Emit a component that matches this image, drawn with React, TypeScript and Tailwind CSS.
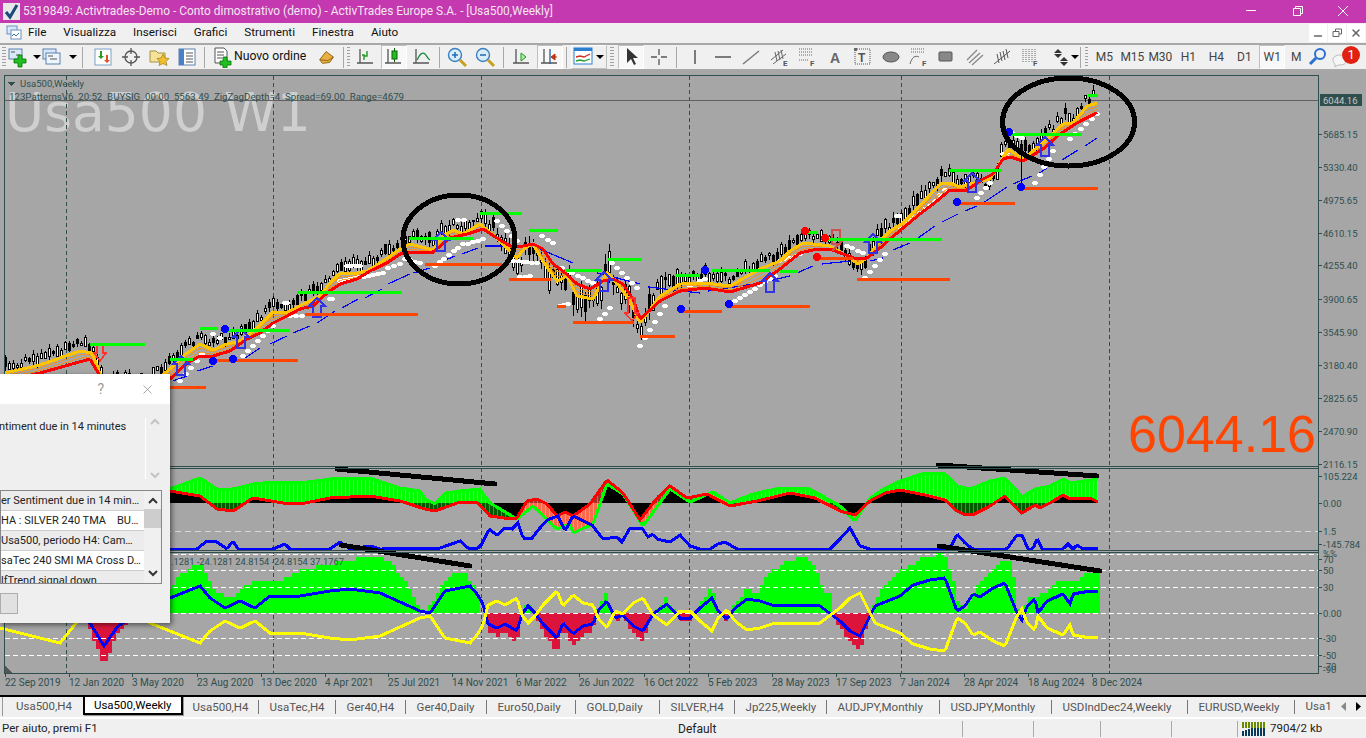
import type { ReactNode } from "react";
import { X, Minus } from "lucide-react";

type Pt = [number, number];

const interp = (pts: Pt[], x: number) => {
  if (x <= pts[0][0]) return pts[0][1];
  for (let i = 1; i < pts.length; i++) {
    if (x <= pts[i][0]) {
      const [x0, y0] = pts[i - 1];
      const [x1, y1] = pts[i];
      return y0 + ((y1 - y0) * (x - x0)) / (x1 - x0);
    }
  }
  return pts[pts.length - 1][1];
};

const sample = (fn: (x: number) => number, from: number, to: number, step = 2) => {
  const out: string[] = [];
  for (let x = from; x <= to; x += step) out.push(`${x},${fn(x).toFixed(1)}`);
  return out.join(" ");
};

const rng = (seed: number) => () => {
  seed = (seed * 16807) % 2147483647;
  return seed / 2147483647;
};

// main pane
const redPts: Pt[] = [[5,380],[40,372],[90,358],[100,375],[120,400],[150,392],[170,378],[187,362],[200,355],[213,355],[230,350],[247,338],[260,332],[273,322],[287,315],[300,308],[313,305],[327,292],[340,283],[357,278],[370,270],[387,262],[400,253],[417,251],[433,251],[450,237],[467,233],[483,228],[497,237],[510,245],[523,245],[533,243],[543,248],[553,263],[563,270],[577,283],[590,288],[603,280],[613,278],[623,283],[633,298],[640,318],[660,300],[680,290],[705,287],[730,291],[760,282],[780,268],[790,260],[800,252],[813,249],[830,248],[843,253],[857,258],[867,257],[880,247],[890,238],[903,227],[920,213],[937,200],[950,189],[967,189],[983,178],[993,173],[1003,158],[1010,156],[1023,160],[1043,148],[1060,133],[1077,122],[1098,111]];
const yellowPts: Pt[] = [[5,372],[40,364],[80,350],[92,352],[105,385],[150,384],[170,368],[183,355],[200,343],[213,349],[227,343],[240,340],[257,327],[273,311],[287,312],[303,303],[320,295],[330,282],[340,272],[353,273],[367,270],[383,260],[400,248],[410,243],[433,249],[443,235],[453,229],[463,233],[480,223],[497,237],[517,257],[525,247],[533,243],[543,260],[557,280],[567,275],[577,295],[593,298],[607,272],[617,282],[630,300],[640,322],[660,295],[680,283],[705,282],[730,285],[760,268],[780,260],[790,250],[803,242],[813,243],[830,245],[847,255],[858,263],[867,257],[880,240],[890,230],[903,222],[913,212],[927,197],[940,183],[950,182],[960,186],[970,183],[990,178],[997,167],[1008,148],[1023,158],[1033,150],[1043,142],[1063,123],[1073,122],[1087,105],[1098,102]];
const red = (x: number) => interp(redPts, x);
const yellow = (x: number) => interp(yellowPts, x);
const volPts: Pt[] = [[0,12],[300,12],[480,14],[520,24],[600,32],[660,24],[760,12],[860,18],[960,16],[1098,16]];

const greenSegs = [[90,145,343],[170,193,358],[200,218,327],[228,290,329],[297,402,291],[409,474,237],[480,522,212],[529,558,229],[565,602,269],[608,642,258],[675,700,274],[712,770,269],[780,798,270],[808,818,231],[828,942,238],[949,1002,169],[1010,1082,133],[1088,1098,94]];
const orangeSegs = [[170,206,386],[217,298,359],[305,418,313],[425,502,263],[509,551,278],[557,566,305],[573,634,321],[640,675,335],[680,722,310],[730,810,305],[820,853,257],[857,950,278],[960,1015,202],[1023,1098,187]];
const blueDots: Pt[] = [[225,328],[213,360],[233,358],[705,269],[681,308],[729,303],[957,201],[1009,131],[1021,186]];
const redDots: Pt[] = [[805,230],[825,237],[817,256]];
const whiteSegs = [[180,380,202,353],[213,333,220,337],[243,355,273,325],[290,315,302,315],[285,302,287,302],[330,298,332,298],[340,280,383,272],[347,265,360,265],[388,267,400,263],[405,258,420,262],[435,265,463,243],[468,243,483,238],[458,219,464,219],[497,220,517,240],[513,260,537,262],[520,276,530,275],[542,235,553,242],[562,267,593,282],[560,305,568,303],[600,318,610,307],[612,262,637,287],[640,345,665,305],[690,285,705,278],[735,300,775,275],[780,260,800,253],[847,245,863,252],[865,277,885,253],[897,215,899,215],[900,226,920,212],[920,212,935,200],[935,200,950,183],[977,197,990,182],[1003,153,1007,153],[1012,132,1022,137],[1035,182,1053,150],[1070,138,1097,113]];
const longMaSegs: Pt[][] = [[[173,380],[187,375]],[[197,370],[213,365]],[[245,357],[260,347]],[[270,343],[287,335]],[[293,332],[310,325]],[[317,322],[335,310]],[[342,307],[358,298]],[[365,297],[382,288]],[[388,283],[410,273]],[[413,272],[430,267]],[[443,260],[455,255]],[[462,253],[478,247]],[[485,245],[510,245]],[[540,248],[573,262]],[[597,272],[640,283]],[[648,286],[700,292]],[[708,290],[760,282]],[[768,280],[790,275]],[[797,272],[813,265]],[[822,263],[850,260]],[[870,260],[883,257]],[[893,249],[910,242]],[[918,237],[935,225]],[[942,221],[958,213]],[[965,210],[977,205]],[[983,202],[1007,186]],[[1013,183],[1032,175]],[[1038,173],[1047,167]],[[1062,159],[1078,149]],[[1085,145],[1097,137]]];
const houses: Pt[] = [[181,365],[241,338],[317,307],[441,241],[604,281],[770,282],[873,243],[972,182],[1045,146]];

// second pane
const greenLine: Pt[] = [[170,488],[200,477],[217,488],[233,488],[253,483],[273,481],[300,482],[330,478],[370,477],[400,487],[420,490],[425,498],[435,503],[445,492],[460,490],[480,488],[490,502],[517,518],[533,505],[557,528],[570,523],[573,532],[593,523],[607,483],[623,493],[643,525],[670,488],[690,501],[713,491],[730,502],[753,493],[780,487],[810,488],[840,505],[855,520],[870,497],[885,487],[900,480],[925,472],[945,473],[957,485],[970,488],[990,480],[1005,477],[1017,490],[1022,496],[1035,488],[1050,485],[1063,478],[1070,482],[1098,478]];
const redLine: Pt[] = [[170,490],[200,495],[217,508],[233,510],[253,497],[283,502],[300,503],[330,497],[370,495],[400,500],[425,508],[435,510],[460,501],[477,501],[490,515],[503,517],[517,517],[527,500],[537,498],[547,503],[557,515],[565,511],[573,515],[590,503],[607,479],[623,492],[640,519],[657,497],[670,485],[687,497],[707,493],[730,505],[757,500],[770,497],[790,492],[815,497],[840,510],[855,514],[870,500],[885,492],[900,489],[925,494],[945,499],[957,510],[965,514],[975,513],[990,505],[1005,495],[1017,508],[1022,512],[1035,504],[1040,507],[1050,502],[1063,494],[1070,498],[1090,497],[1098,501]];
const blueLine2: Pt[] = [[170,548],[197,548],[207,540],[217,541],[227,548],[233,540],[238,548],[273,548],[285,543],[290,548],[330,548],[340,541],[350,548],[370,545],[380,548],[440,547],[460,540],[468,547],[477,548],[482,543],[489,528],[497,534],[505,527],[512,528],[518,522],[523,537],[532,537],[540,527],[547,519],[558,515],[565,530],[573,515],[592,524],[603,538],[617,536],[622,541],[630,527],[642,527],[648,536],[653,533],[657,538],[670,541],[680,534],[690,545],[700,548],[710,548],[718,543],[725,541],[737,548],[830,548],[840,538],[850,527],[860,545],[870,548],[950,548],[957,533],[965,542],[973,548],[1007,548],[1017,534],[1022,534],[1028,548],[1033,548],[1037,537],[1042,548],[1063,548],[1068,543],[1073,548],[1077,544],[1083,548],[1098,547]];

// third pane
const blueLine3: Pt[] = [[0,600],[20,595],[60,585],[90,622],[104,645],[118,625],[150,605],[170,597],[200,585],[210,597],[225,607],[240,600],[255,607],[270,595],[300,595],[330,590],[350,588],[380,592],[420,610],[430,612],[445,590],[470,585],[477,593],[483,603],[488,623],[497,627],[505,623],[517,630],[522,613],[528,605],[535,612],[543,623],[557,637],[563,622],[573,633],[583,625],[593,623],[598,610],[607,600],[615,617],[623,614],[633,625],[643,630],[653,613],[667,603],[680,617],[690,617],[700,607],[712,597],[718,610],[727,618],[735,607],[747,598],[760,600],[775,605],[800,604],[820,605],[840,620],[850,630],[860,635],[875,605],[900,595],[913,584],[930,579],[945,577],[957,610],[965,605],[973,593],[980,596],[993,587],[1005,582],[1017,612],[1022,619],[1027,605],[1035,598],[1038,612],[1047,600],[1063,593],[1070,603],[1073,593],[1090,590],[1098,591]];
const histPts: Pt[] = [[170,590],[180,575],[190,568],[200,562],[208,575],[215,590],[225,595],[235,595],[245,583],[265,580],[285,578],[300,570],[320,565],[350,560],[370,555],[390,560],[405,580],[415,600],[425,612],[435,598],[445,580],[455,572],[465,572],[475,585],[482,612]];
const histPts2: Pt[] = [[760,587],[770,572],[780,565],[790,560],[805,555],[815,565],[825,590],[835,597],[845,612],[870,612],[875,600],[885,585],[900,570],[925,556],[945,552],[955,585],[957,600],[965,608],[975,590],[985,575],[995,567],[1005,558],[1012,560],[1017,605],[1022,612],[1030,595],[1040,595],[1050,590],[1060,578],[1070,580],[1080,578],[1090,571],[1098,572]];

const priceLabels: [string, number][] = [["5685.15",133],["5330.40",166],["4975.65",199],["4610.15",232],["4255.40",264],["3900.65",298],["3545.90",331],["3180.40",364],["2825.65",397],["2470.90",430],["2116.15",463]];
const timeLabels: [string, number][] = [["22 Sep 2019",5],["12 Jan 2020",69],["3 May 2020",132],["23 Aug 2020",197],["13 Dec 2020",261],["4 Apr 2021",325],["25 Jul 2021",388],["14 Nov 2021",452],["6 Mar 2022",516],["26 Jun 2022",579],["16 Oct 2022",644],["5 Feb 2023",708],["28 May 2023",772],["17 Sep 2023",836],["7 Jan 2024",900],["28 Apr 2024",964],["18 Aug 2024",1028],["8 Dec 2024",1092]];
const lowerLabels: [string, number][] = [["105.224",475],["0.00",502],["1.5",530],["-145.784",543],["70",558],["50",569],["30",586],["0.00",612],["-30",637],["-50",654],["-70",665]];

const Candles = () => {
  const r = rng(4242);
  const items: ReactNode[] = [];
  for (let x = 5; x <= 1096; x += 4) {
    const vol = interp(volPts, x);
    const y = yellow(x);
    const mid = (y < red(x) ? y - 8 : y + 3) + (r() - 0.5) * vol * 0.6;
    const h = 2 + r() * vol * 0.65;
    const up = r() > 0.35;
    const top = Math.round(mid - h / 2);
    const wickTop = top - Math.round(r() * vol * 0.35);
    const wickBot = top + h + r() * vol * 0.4;
    items.push(
      <g key={x}>
        <rect x={x} y={wickTop} width={1} height={wickBot - wickTop} fill="#000" />
        {up ? (
          <rect x={x - 0.5} y={top + 0.5} width={2} height={Math.round(h)} fill="#fff" stroke="#000" strokeWidth={1} />
        ) : (
          <rect x={x - 1} y={top} width={3} height={Math.round(h)} fill="#000" />
        )}
      </g>
    );
  }
  return <g>{items}</g>;
};

const WhiteDots = () => {
  const items: ReactNode[] = [];
  whiteSegs.forEach(([x0, y0, x1, y1], i) => {
    const n = Math.max(1, Math.round(Math.abs(x1 - x0) / 5));
    for (let k = 0; k <= n; k++) {
      const x = Math.round(x0 + ((x1 - x0) * k) / n);
      const y = Math.round(y0 + ((y1 - y0) * k) / n);
      items.push(<path key={`${i}-${k}`} d={`M${x - 3} ${y - 1}h1v-1h4v1h1v2h-1v1h-4v-1h-1z`} fill="#fff" />);
    }
  });
  return <g>{items}</g>;
};

const Osc = () => {
  const bars: ReactNode[] = [];
  const z = 502;
  for (let x = 170; x < 1098; x += 4) {
    const g = interp(greenLine, x + 2);
    const r = interp(redLine, x + 2);
    const top = Math.min(g, r);
    const bot = Math.max(g, r);
    const gUp = g < r;
    const parts: [number, number, string, boolean][] = [];
    if (bot < z) parts.push([bot, z, "#000", false]);
    if (top > z) parts.push([z, top, "#000", false]);
    const above = gUp ? "#00ff00" : "#a5302a";
    const below = gUp ? "#005a00" : "#ff6a4d";
    if (top < z) parts.push([top, Math.min(bot, z), above, true]);
    if (bot > z) parts.push([Math.max(top, z), bot, below, true]);
    parts.forEach(([a, b, c, stripe], i) => {
      bars.push(<rect key={`${x}-${i}`} x={x} y={a} width={4} height={b - a} fill={c} />);
      if (stripe) bars.push(<rect key={`${x}-${i}s`} x={x + 3} y={a} width={1} height={b - a} fill="#fff" opacity={0.3} />);
    });
  }
  return <g>{bars}</g>;
};

const Hist = () => {
  const bars: ReactNode[] = [];
  for (let x = 0; x < 1098; x += 4) {
    const b = interp(blueLine3, x + 2);
    const snap = (v: number) => Math.round(v / 4) * 4;
    if (b > 613 && x < 1010) {
      const h = snap((b - 612) * 1.6);
      bars.push(<rect key={x} x={x} y={612} width={4} height={h} fill="#dc143c" />);
    } else {
      let t = 612 - (612 - b) * 1.7;
      if (x >= 170 && x < 482) t = interp(histPts, x + 2);
      if (x >= 760) t = interp(histPts2, x + 2);
      const h = snap(Math.min(612 - t, 60));
      if (h > 0) bars.push(<rect key={x} x={x} y={612 - h} width={4} height={h} fill="#00ff00" />);
    }
  }
  return <g>{bars}</g>;
};

const Chart = () => (
  <svg viewBox="0 70 1366 624" shapeRendering="crispEdges" className="block w-[1366px] h-[624px] bg-[#a6a6a6] font-['Roboto',sans-serif]">
    <text x={5} y={130} className="text-[53.5px] fill-[#cfcfcf] font-['DejaVu_Sans',sans-serif]">Usa500 W1</text>

    {[66, 273, 481, 689, 901, 1109].map((x) => (
      <line key={x} x1={x} x2={x} y1={75} y2={672} stroke="#2f4f4f" strokeDasharray="4 3" />
    ))}
    <line x1={5} x2={1318} y1={99} y2={99} stroke="#606060" />

    <Candles />
    {longMaSegs.map((s, i) => (
      <polyline key={i} points={s.map((p) => p.join(",")).join(" ")} fill="none" stroke="#0000ff" strokeWidth={1.2} />
    ))}
    <WhiteDots />
    {[0.33, 0.66].map((t) => (
      <polyline key={t} points={sample((x) => red(x) + (yellow(x) - red(x)) * t, 5, 1098)} fill="none" stroke="#ff9000" strokeWidth={1} opacity={0.8} />
    ))}
    <polyline points={sample(yellow, 5, 1098)} fill="none" stroke="#ffc400" strokeWidth={3} />
    <polyline points={sample(red, 5, 1098)} fill="none" stroke="#ff0000" strokeWidth={3} />
    {houses.map(([x, y], i) => (
      <path key={i} d={`M${x - 8} ${y - 2}L${x} ${y - 10}L${x + 8} ${y - 2}H${x + 4}V${y + 9}H${x - 4}V${y - 2}Z`} fill="none" stroke="#3232e6" strokeWidth={1.5} />
    ))}
    <path d="M625 312L632 320L638 312H635V297H628V312Z" fill="none" stroke="#ff3030" strokeWidth={1.5} />
    <path d="M94 352L100 360L106 352H103V344H97V352Z" fill="none" stroke="#ff3030" strokeWidth={1.5} />
    <path d="M832 243V229H840V243ZM832 250L842 240" fill="none" stroke="#d05050" strokeWidth={1.5} />
    <line x1={1021.5} x2={1021.5} y1={150} y2={186} stroke="#000" />

    {greenSegs.map(([a, b, y], i) => (
      <rect key={i} x={a} y={y - 1.5} width={b - a} height={3} fill="#00ff00" />
    ))}
    {orangeSegs.map(([a, b, y], i) => (
      <rect key={i} x={a} y={y - 1.5} width={b - a} height={3} fill="#ff4500" />
    ))}
    {blueDots.map(([x, y], i) => (
      <circle key={i} cx={x} cy={y} r={4} fill="#0000ff" />
    ))}
    {redDots.map(([x, y], i) => (
      <circle key={i} cx={x} cy={y} r={4} fill="#ff0000" />
    ))}

    <ellipse cx={459} cy={238.5} rx={56} ry={44.5} fill="none" stroke="#000" strokeWidth={5} />
    <ellipse cx={1068.5} cy={121} rx={66} ry={44} fill="none" stroke="#000" strokeWidth={5} />

    <path d="M7 81h8l-4 4z" fill="#2f4f4f" />
    <text x={20} y={86} className="text-[9.5px] fill-[#2f4f4f]">Usa500,Weekly</text>
    <text x={9} y={99} className="text-[9.7px] fill-[#2f4f4f]" xmlSpace="preserve">123PatternsV6  20:52  BUYSIG  00:00  5563.49  ZigZagDepth=4  Spread=69.00  Range=4679</text>

    <text x={1128} y={451} className="text-[52px] fill-[#ff4500] font-['Liberation_Sans',sans-serif]">6044.16</text>

    {/* indicator panes */}
    <rect x={0} y={465} width={1366} height={3} fill="#a6a6a6" />
    <rect x={0} y={549} width={1366} height={3} fill="#a6a6a6" />
    <Osc />
    <line x1={5} x2={1318} y1={530} y2={530} stroke="#d8d8d8" strokeDasharray="6 4" />
    <polyline points={sample((x) => interp(greenLine, x), 170, 1098)} fill="none" stroke="#00ff00" strokeWidth={3} />
    <polyline points={sample((x) => interp(redLine, x), 170, 1098)} fill="none" stroke="#ff0000" strokeWidth={3} />
    <polyline points={sample((x) => interp(blueLine2, x), 170, 1098)} fill="none" stroke="#0000ff" strokeWidth={3} />

    <Hist />
    {[553, 569, 586, 612, 637, 654, 672].map((y) => (
      <line key={y} x1={5} x2={1318} y1={y} y2={y} stroke="#fff" strokeDasharray="5 3" />
    ))}
    <polyline points={sample((x) => interp(blueLine3, x), 0, 1098)} fill="none" stroke="#0000ff" strokeWidth={3} />
    <polyline points={sample((x) => 612 + (612 - interp(blueLine3, x)) + 3, 0, 1098)} fill="none" stroke="#ffff00" strokeWidth={3} />
    <text x={171} y={564} className="text-[9.3px] fill-[#2f4f4f]">.1281 -24.1281 24.8154 -24.8154 37.1767</text>

    <line x1={337} y1={468} x2={495} y2={483} stroke="#000" strokeWidth={5} strokeLinecap="round" />
    <line x1={938} y1={464} x2={1097} y2={475} stroke="#000" strokeWidth={5} strokeLinecap="round" />
    <line x1={341} y1={544} x2={470} y2={565} stroke="#000" strokeWidth={5} strokeLinecap="round" />
    <line x1={939} y1={545} x2={1100} y2={570} stroke="#000" strokeWidth={5} strokeLinecap="round" />

    {/* frame and scales */}
    <path d="M4.5 74.5H1318.5V672.5H4.5Z" fill="none" stroke="#2f4f4f" />
    <path d="M5 465.500H1318M5 467.500H1318M5 549.500H1318M5 551.500H1318" fill="none" stroke="#2f4f4f" />
    <path d="M5 672L12 672L5 665Z" fill="#555" />
    {priceLabels.map(([t, y]) => (
      <g key={t}>
        <line x1={1318} x2={1322} y1={y} y2={y} stroke="#2f4f4f" />
        <text x={1323} y={y + 3.5} className="text-[9.5px] fill-[#2f4f4f]">{t}</text>
      </g>
    ))}
    {lowerLabels.map(([t, y], i) => (
      <g key={i}>
        <line x1={1318} x2={1322} y1={y} y2={y} stroke="#2f4f4f" />
        <text x={1323} y={y + 3.5} className="text-[9.5px] fill-[#2f4f4f]">{t}</text>
      </g>
    ))}
    <text x={1323} y={556} className="text-[9.5px] fill-[#2f4f4f]">%%</text>
    <text x={1323} y={672} className="text-[9.5px] fill-[#2f4f4f]">-90</text>
    <rect x={1320} y={93} width={42} height={12} fill="#2f4f4f" />
    <text x={1323} y={103} className="text-[9.5px] fill-[#c8c8c8]">6044.16</text>
    {timeLabels.map(([t, x]) => (
      <g key={t}>
        <line x1={x} x2={x} y1={672} y2={676} stroke="#2f4f4f" />
        <text x={x} y={685} className="text-[10px] fill-[#2f4f4f]">{t}</text>
      </g>
    ))}
  </svg>
);

// toolbar
const Grip = () => <div className="mx-[2px] w-[4px] h-[20px] bg-[repeating-linear-gradient(to_bottom,#a0a0a0_0,#a0a0a0_1px,#f0f0f0_1px,#f0f0f0_3px)]" />;
const Sep = () => <div className="w-[1px] h-[21px] bg-[#a8a8a8]" />;

const Ico = ({ children, w = 22 }: { children: ReactNode; w?: number }) => (
  <svg width={w} height={22} viewBox={`0 0 ${w} 22`} fill="none">{children}</svg>
);

const Caret = () => <svg width={8} height={5} viewBox="0 0 8 5"><path d="M0 0h8L4 4z" fill="#000" /></svg>;

const Axes = () => <path d="M5 3v14M2 17h16" stroke="#555" strokeWidth={1.3} />;

const chartIcons: Record<string, ReactNode> = {
  market: <><rect x={3} y={3} width={16} height={16} fill="#fff" stroke="#7aa0c8" /><path d="M8 5v5H6l3 3 3-3h-2V5z" fill="#2a9a2a" /><path d="M14 17v-5h-2l3-3 3 3h-2v5z" transform="rotate(180 15 13)" fill="#e05020" /></>,
  cross: <><circle cx={11} cy={11} r={6} stroke="#555" strokeWidth={1.3} /><path d="M11 2v6M11 14v6M2 11h6M14 11h6" stroke="#555" strokeWidth={1.3} /></>,
  folder: <><path d="M2 5h6l2 2h7v9H2z" fill="#f5e39a" stroke="#a89040" /><path d="M15 8l2 4 4 .5-3 3 1 4-4-2-4 2 1-4-3-3 4-.5z" fill="#f0c030" stroke="#a07a10" strokeWidth={0.7} /></>,
  list: <><rect x={3} y={3} width={16} height={16} fill="#fff" stroke="#5a80b0" /><rect x={3} y={3} width={5} height={16} fill="#4a80c8" /><path d="M10 7h7M10 10h7M10 13h7M10 16h7" stroke="#555" /></>,
  order: <><path d="M3 2h9l3 3v12H3z" fill="#fff" stroke="#555" /><path d="M5 6h7M5 9h7M5 12h5" stroke="#555" /><path d="M11 11h4v4h4v4h-4v3h-4v-3H8v-4h3z" fill="#1fc01f" stroke="#0a700a" strokeWidth={0.8} /></>,
  gold: <><path d="M3 14l7-9 8 6-4 6-8 1z" fill="#e8b040" stroke="#8a6010" /><path d="M3 14l9 1 6-4" stroke="#8a6010" /></>,
  bars: <><Axes /><path d="M9 14V9H7M9 10h3V5" stroke="#1a9a1a" strokeWidth={1.4} /></>,
  candle: <><Axes /><rect x={9} y={5} width={5} height={8} fill="#1fc01f" stroke="#0a600a" /><path d="M11.500 2v3M11.500 13v3" stroke="#0a600a" /></>,
  line: <><Axes /><path d="M6 14c3-7 6-8 8-6s3 5 5 6" stroke="#1a8a3a" strokeWidth={1.3} /></>,
  zoomin: <><circle cx={9} cy={9} r={6.5} fill="#d8ecfa" stroke="#3a80c0" strokeWidth={1.4} /><path d="M6 9h6M9 6v6" stroke="#2a70b0" strokeWidth={1.6} /><path d="M14 14l6 6" stroke="#c8a020" strokeWidth={3} /></>,
  zoomout: <><circle cx={9} cy={9} r={6.5} fill="#d8ecfa" stroke="#3a80c0" strokeWidth={1.4} /><path d="M6 9h6" stroke="#2a70b0" strokeWidth={1.6} /><path d="M14 14l6 6" stroke="#c8a020" strokeWidth={3} /></>,
  shift: <><Axes /><path d="M10 7l5 4-5 4z" fill="#a8f0a8" stroke="#1a9a1a" /></>,
  auto: <><Axes /><path d="M11 3v15" stroke="#2060a0" strokeWidth={1.3} /><path d="M18 11h-3M12 11l4-3v6z" fill="#c03010" stroke="#c03010" /></>,
  indic: <><rect x={1} y={2} width={18} height={16} fill="#fff" stroke="#2a80d0" /><rect x={1} y={2} width={18} height={3} fill="#2a80d0" /><path d="M3 11l4-1 4 1 6-3" stroke="#d03020" strokeWidth={1.3} /><path d="M3 15l4-1 4 1 6-2" stroke="#20a030" strokeWidth={1.3} /></>,
  cursor: <path d="M7 2v15l4-4 3 6 2-1-3-6h5z" fill="#333" />,
  crosshair: <path d="M11 3v6M11 13v6M3 11h6M13 11h6" stroke="#555" strokeWidth={1.3} />,
  vline: <path d="M11 4v14" stroke="#555" strokeWidth={1.5} />,
  hline: <path d="M3 11h16" stroke="#555" strokeWidth={1.5} />,
  trend: <path d="M3 18L19 5" stroke="#777" strokeWidth={1.4} />,
  eq: <><path d="M3 14L15 4M5 18L18 8M7 6l2 9M10 5l2 9M13 4l2 9" stroke="#666" /><text x={15} y={20} fontSize={8} fontWeight={700} fill="#555">E</text></>,
  fibo: <><path d="M3 3h14M3 6h14M3 9h14M3 14h9" stroke="#666" strokeDasharray="1 1" /><text x={14} y={20} fontSize={8} fontWeight={700} fill="#555">F</text></>,
  text: <text x={6} y={17} fontSize={14} fontWeight={700} fill="#666" fontFamily="Liberation Sans">A</text>,
  label: <><rect x={3} y={3} width={15} height={15} stroke="#555" strokeDasharray="1 1" /><rect x={2} y={2} width={3} height={3} fill="#666" /><text x={6} y={16} fontSize={12} fontWeight={700} fill="#555" fontFamily="Liberation Sans">T</text></>,
  ellipse: <ellipse cx={11} cy={11} rx={8} ry={5} fill="#888" stroke="#555" />,
  arc: <><path d="M3 3h14M3 6h14" stroke="#666" strokeDasharray="1 1" /><path d="M2 18c2-7 5-9 9-7" stroke="#666" /><text x={14} y={20} fontSize={8} fontWeight={700} fill="#555">F</text></>,
  rect: <rect x={4} y={6} width={13} height={9} rx={1} fill="#888" stroke="#555" />,
  para: <path d="M4 14L14 4M6 17L17 7M9 19L20 9" stroke="#888" strokeWidth={1.3} />,
  gann: <path d="M3 18L19 5M6 8l2 9M9 6l2 9M12 5l2 9M15 3l2 9" stroke="#555" />,
  fan: <><path d="M4 3v14M7 3v14M10 3v14M13 3v14M16 3v14" stroke="#666" strokeDasharray="1 1" /><text x={14} y={20} fontSize={8} fontWeight={700} fill="#555">F</text></>,
  arrows: <><path d="M6 7l4-4 4 4z" fill="#333" /><path d="M6 8l4 4 4-4z" fill="#333" /><path d="M12 15l4-4 4 4zM12 16l4 4 4-4z" fill="#333" /></>,
  search: <><circle cx={13} cy={8} r={5} stroke="#2a70d0" strokeWidth={2} /><path d="M9 12l-6 6" stroke="#2a70d0" strokeWidth={3} /></>,
};

const Btn = ({ icon, pressed = false }: { icon: string; pressed?: boolean }) => (
  <div className={pressed ? "w-[26px] mx-[1px] h-[24px] flex items-center justify-center border border-[#c0c0c0] border-r-white border-b-white bg-[#f8f8f8]" : "w-[28px] h-[24px] flex items-center justify-center"}>
    <Ico>{chartIcons[icon]}</Ico>
  </div>
);

const Period = ({ label, pressed = false }: { label: string; pressed?: boolean }) => (
  <div className={pressed ? "w-[26px] mx-[1px] h-[24px] flex items-center justify-center border border-[#c0c0c0] border-r-white border-b-white bg-[#f8f8f8] text-[12px] text-[#444]" : "w-[28px] h-[24px] flex items-center justify-center text-[12px] text-[#444]"}>
    {label}
  </div>
);

const tabs: [string, string][] = [
  ["Usa500,H4", "w-[77px]"],
  ["UsaTec,H4", "w-[77px]"],
  ["Ger40,H4", "w-[70px]"],
  ["Ger40,Daily", "w-[81px]"],
  ["Euro50,Daily", "w-[89px]"],
  ["GOLD,Daily", "w-[84px]"],
  ["SILVER,H4", "w-[75px]"],
  ["Jp225,Weekly", "w-[92px]"],
  ["AUDJPY,Monthly", "w-[113px]"],
  ["USDJPY,Monthly", "w-[112px]"],
  ["USDIndDec24,Weekly", "w-[136px]"],
  ["EURUSD,Weekly", "w-[107px]"],
];
const menu = ["File", "Visualizza", "Inserisci", "Grafici", "Strumenti", "Finestra", "Aiuto"];
const alerts = ["er Sentiment due in 14 min…", "HA : SILVER 240 TMA    BU…", "Usa500, periodo H4: Cam…", "saTec 240 SMI MA Cross D…", "lfTrend signal down"];

const Dialog = () => (
  <div className="absolute left-0 top-[303px] w-[170px] h-[249px] bg-[#efefef] shadow-[2px_2px_5px_rgba(0,0,0,0.5)] text-[#222] flex flex-col">
    <div className="h-[30px] bg-white flex items-center justify-end shrink-0 text-[#999]">
      <span className="mr-[36px] text-[14px]">?</span>
      <X size={15} strokeWidth={1} className="mr-[15px] text-[#777]" />
    </div>
    <div className="h-[86px] flex justify-between shrink-0 pt-[15px] text-[11px]">
      <span className="whitespace-nowrap -ml-[1px]">ntiment due in 14 minutes</span>
      <div className="w-[25px] mr-0 -mt-[1px] h-[61px] border-l border-white flex flex-col justify-between items-center pr-[7px] text-[#bbb] text-[10px]">
        <svg width={10} height={7} viewBox="0 0 10 7"><path d="M1 6l4-4 4 4" fill="none" stroke="#c4c4c4" strokeWidth={2} /></svg>
        <svg width={10} height={7} viewBox="0 0 10 7"><path d="M1 1l4 4 4-4" fill="none" stroke="#c4c4c4" strokeWidth={2} /></svg>
      </div>
    </div>
    <div className="w-[162px] h-[94px] border border-[#888] bg-white flex shrink-0 overflow-hidden text-[11px]">
      <div className="w-[143px] overflow-hidden">
        {alerts.map((t, i) => (
          <div key={t} className={i % 2 === 0 ? "h-[20px] leading-[19px] bg-[#ececec] border-b border-[#ccc] whitespace-pre" : "h-[20px] leading-[19px] bg-white border-b border-[#ccc] whitespace-pre"}>{t}</div>
        ))}
      </div>
      <div className="flex-1 bg-[#f0f0f0] flex flex-col items-center">
        <svg width={12} height={18} viewBox="0 0 12 18"><path d="M2 12l4-4 4 4" fill="none" stroke="#333" strokeWidth={2} /></svg>
        <div className="w-full h-[19px] bg-[#cdcdcd]" />
        <div className="flex-1" />
        <svg width={12} height={18} viewBox="0 0 12 18"><path d="M2 6l4 4 4-4" fill="none" stroke="#333" strokeWidth={2} /></svg>
      </div>
    </div>
    <div className="mt-[9px] w-[18px] h-[21px] bg-[#e1e1e1] border border-[#adadad]" />
  </div>
);

export default function App() {
  return (
    <div className="w-[1366px] h-[738px] overflow-hidden flex flex-col bg-[#f0f0f0] font-['Roboto',sans-serif]">
      <div className="h-[23px] bg-[#c438b0] flex items-center text-[#f4e6f2] shrink-0">
        <div className="w-[23px] h-[23px] flex items-center justify-center">
          <svg width={17} height={17} viewBox="0 0 17 17"><rect width={17} height={17} fill="#e8e8e8" /><path d="M3 9l4 5 7-12" fill="none" stroke="#1a4a7a" strokeWidth={3} /></svg>
        </div>
        <span className="text-[11.9px] whitespace-nowrap">5319849: Activtrades-Demo - Conto dimostrativo (demo) - ActivTrades Europe S.A. - [Usa500,Weekly]</span>
        <div className="ml-auto flex items-center">
          <svg width={46} height={23} viewBox="0 0 46 23"><path d="M18 10.500h10" stroke="#fff" /></svg>
          <svg width={46} height={23} viewBox="0 0 46 23" fill="none"><path d="M19.500 8.500h7v7h-7zM21.500 8.500v-2h7v7h-2" stroke="#fff" /></svg>
          <svg width={46} height={23} viewBox="0 0 46 23"><path d="M18 6l10 10M28 6L18 16" stroke="#fff" /></svg>
        </div>
      </div>

      <div className="h-[20px] flex items-center shrink-0 text-[11.7px] text-[#111]">
        <div className="w-[28px] flex justify-center">
          <svg width={16} height={16} viewBox="0 0 16 16" fill="none"><rect x={1} y={1} width={10} height={8} fill="#d8e8f8" stroke="#6a90c0" /><rect x={5} y={5} width={10} height={9} fill="#fff" stroke="#6a90c0" /><path d="M6 11l2-2 2 2 3-3" stroke="#3a70a0" /></svg>
        </div>
        <div className="flex gap-[17px]">
          {menu.map((m) => <span key={m} className="whitespace-nowrap">{m}</span>)}
        </div>
        <div className="ml-auto flex gap-[1px] mr-[1px]">
          <div className="w-[18px] h-[18px] bg-white flex items-center justify-center text-[#666]"><Minus size={12} strokeWidth={3} className="translate-y-[3px]" /></div>
          <div className="w-[18px] h-[18px] bg-white flex items-center justify-center">
            <svg width={10} height={10} viewBox="0 0 10 10" fill="none"><path d="M1 3.500h6v5H1zM3.500 3V1h6v5H7" stroke="#666" /></svg>
          </div>
          <div className="w-[18px] h-[18px] bg-white flex items-center justify-center text-[#666]"><X size={12} strokeWidth={3} /></div>
        </div>
      </div>

      <div className="h-[28px] border-t-2 border-b-2 border-[#a8a8a8] flex items-center shrink-0 text-[#333]">
        <div className="w-[8px] flex justify-center"><Grip /></div>
        <div className="w-[34px] flex items-center gap-[3px]">
          <svg width={22} height={22} viewBox="0 0 22 22" fill="none"><rect x={1} y={3} width={13} height={10} fill="#d8e8f8" stroke="#5a80b0" /><path d="M3 6h4M8 9h4" stroke="#555" /><path d="M10 9h4v4h4v4h-4v4h-4v-4H6v-4h4z" fill="#1fc01f" stroke="#0a700a" strokeWidth={0.8} /></svg>
          <Caret />
        </div>
        <div className="w-[35px] flex items-center gap-[3px]">
          <svg width={24} height={22} viewBox="0 0 24 22" fill="none"><rect x={1} y={3} width={13} height={10} fill="#d8e8f8" stroke="#5a80b0" /><rect x={4} y={7} width={14} height={11} fill="#eef5fc" stroke="#5a80b0" /><path d="M6 10h5M8 13h7" stroke="#555" /></svg>
          <Caret />
        </div>
        <div className="w-[12px] flex justify-center"><Sep /></div>
        <Btn icon="market" />
        <Btn icon="cross" />
        <Btn icon="folder" />
        <Btn icon="list" />
        <div className="w-[8px] flex justify-center"><Sep /></div>
        <div className="w-[108px] flex items-center pl-[3px]">
          <Ico>{chartIcons.order}</Ico>
          <span className="text-[12.25px] whitespace-nowrap text-[#111] -translate-y-[1px]">Nuovo ordine</span>
        </div>
        <div className="w-[20px] flex justify-center"><Ico>{chartIcons.gold}</Ico></div>
        <div className="w-[15px] flex justify-start pl-[6px] gap-[1px]"><Sep /><Grip /></div>
        <Btn icon="bars" />
        <Btn icon="candle" pressed />
        <Btn icon="line" />
        <div className="w-[7px] flex justify-center"><Sep /></div>
        <Btn icon="zoomin" />
        <Btn icon="zoomout" />
        <div className="w-[9px] flex justify-center"><Sep /></div>
        <Btn icon="shift" />
        <Btn icon="auto" pressed />
        <div className="w-[6px] flex justify-center"><Sep /></div>
        <div className="w-[36px] mx-[1px] h-[24px] flex items-center gap-[3px] border border-[#c0c0c0] border-l-white border-t-white pl-[1px]">
          <Ico w={20}>{chartIcons.indic}</Ico>
          <Caret />
        </div>
        <div className="w-[9px] flex justify-center"><Grip /></div>
        <Btn icon="cursor" pressed />
        <Btn icon="crosshair" />
        <div className="w-[8px] flex justify-center"><Sep /></div>
        <Btn icon="vline" />
        <Btn icon="hline" />
        <Btn icon="trend" />
        <Btn icon="eq" />
        <Btn icon="fibo" />
        <Btn icon="text" />
        <Btn icon="label" />
        <Btn icon="ellipse" />
        <Btn icon="arc" />
        <Btn icon="rect" />
        <Btn icon="para" />
        <Btn icon="gann" />
        <Btn icon="fan" />
        <div className="w-[36px] flex items-center gap-[1px] pl-[4px]">
          <Ico>{chartIcons.arrows}</Ico>
          <Caret />
        </div>
        <div className="w-[10px] flex gap-[2px]"><Sep /><Grip /></div>
        <Period label="M5" />
        <Period label="M15" />
        <Period label="M30" />
        <Period label="H1" />
        <Period label="H4" />
        <Period label="D1" />
        <Period label="W1" pressed />
        <div className="w-[20px] text-center text-[12px] text-[#444]">M</div>
        <div className="w-[24px] flex justify-center"><Ico>{chartIcons.search}</Ico></div>
        <div className="w-[36px] h-[24px] relative">
          <svg width={18} height={14} viewBox="0 0 18 14" className="absolute left-[2px] top-[9px]"><path d="M1 6c0-3 3-5 7-5s7 2 7 5-3 5-7 5H6l-3 2v-3C2 9 1 8 1 6z" fill="#f5f5f5" stroke="#bbb" /></svg>
          <div className="absolute left-[12px] top-[1px] w-[18px] h-[18px] rounded-full bg-[#e02010] text-white text-[13px] leading-[18px] text-center">1</div>
        </div>
      </div>

      <div className="relative h-[624px] shrink-0">
        <Chart />
        <Dialog />
      </div>

      <div className="h-[22px] shrink-0 border-t-2 border-black flex items-start text-[11.5px] text-[#555] overflow-hidden relative">
        <div className="h-[19px] pl-[13px] pr-[11px] leading-[18px] ml-[2px] border-l border-[#999]">Usa500,H4</div>
        <div className="h-[20px] px-[9px] leading-[18px] bg-white text-black border-r-2 border-l-2 border-b-2 border-black -mt-[2px] pt-[1px] shadow-[1px_1px_0_#999]">Usa500,Weekly</div>
        <div className="flex -ml-[1px]">
          {tabs.map(([t, w], i) => (
            <div key={t + i} className={`${w} flex items-center justify-between h-[19px] whitespace-nowrap`}>
              <span className="pl-[11px] leading-[18px]">{t}</span>
              <div className="w-[1px] h-[14px] bg-[#777]" />
            </div>
          ))}
        </div>
        <span className="pl-[11px] leading-[18px]">Usa1</span>
        <div className="absolute right-0 top-0 h-[19px] w-[29px] bg-[#f0f0f0] flex items-center justify-between px-[4px]">
          <svg width={6} height={9} viewBox="0 0 6 9"><path d="M5 0v9L0 4.500z" fill="#888" /></svg>
          <svg width={6} height={9} viewBox="0 0 6 9"><path d="M0 0v9l5-4.500z" fill="#000" /></svg>
        </div>
      </div>

      <div className="h-[21px] shrink-0 border-t-2 border-white flex items-center text-[11.5px] text-[#222] relative">
        <span className="pl-[2px] w-[678px]">Per aiuto, premi F1</span>
        <span className="w-[284px] text-[12px]">Default</span>
        <div className="w-[71px] h-[16px] border-l border-[#aaa]" />
        <div className="w-[67px] h-[16px] border-l border-[#aaa]" />
        <div className="w-[71px] h-[16px] border-l border-[#aaa]" />
        <div className="w-[66px] h-[16px] border-l border-[#aaa]" />
        <div className="h-[16px] border-l border-[#aaa] pl-[4px] flex items-center gap-[4px]">
          <svg width={24} height={14} viewBox="0 0 24 14">
            {[0,3,6,9,12,15,18,21].map((x, i) => (
              <g key={x}><rect x={x} y={0} width={2} height={6} fill="#6a8a00" /><rect x={x} y={Math.max(6, 9 - i)} width={2} height={14 - Math.max(6, 9 - i)} fill="#0a3a5a" /></g>
            ))}
          </svg>
          <span>7904/2 kb</span>
        </div>
      </div>
    </div>
  );
}
